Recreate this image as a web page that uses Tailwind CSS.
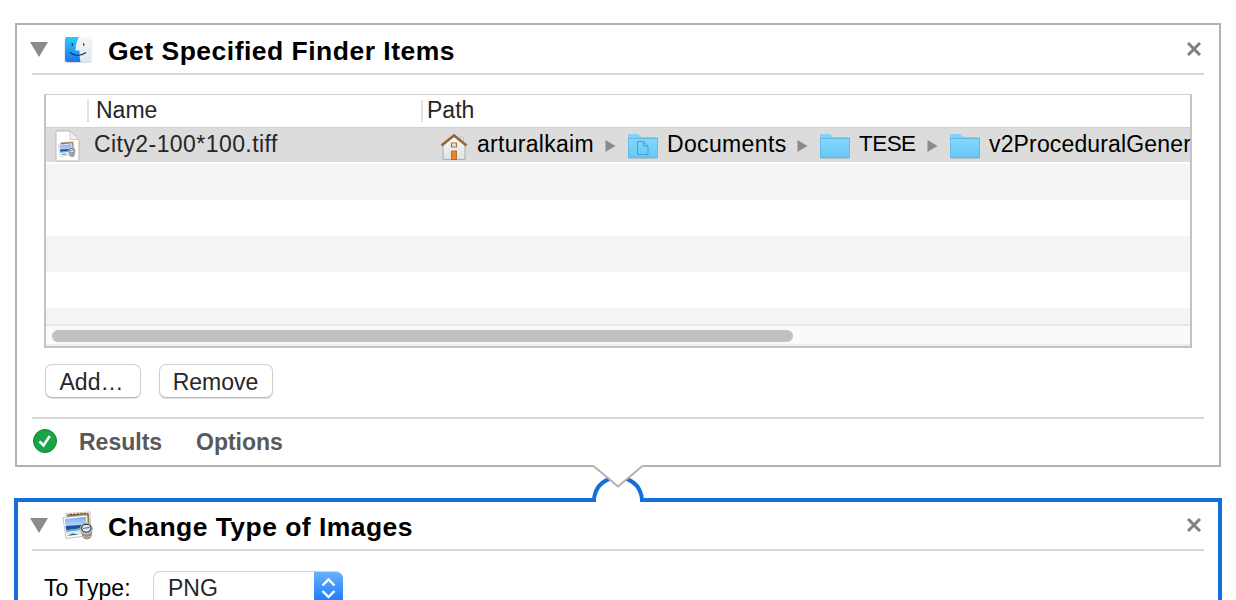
<!DOCTYPE html>
<html lang="en">
<head>
<meta charset="utf-8">
<title>Automator workflow</title>
<script src="https://cdn.jsdelivr.net/npm/@tailwindcss/browser@4"></script>
</head>
<body class="bg-white">
<svg class="absolute h-0 w-0">
  <defs>
    <linearGradient id="fold" x1="0" y1="0" x2="0" y2="1"><stop offset="0" stop-color="#84d6fb"/><stop offset="1" stop-color="#66c8f6"/></linearGradient>
    <linearGradient id="face" x1="0" y1="0" x2="0" y2="1"><stop offset="0" stop-color="#27cdfb"/><stop offset="1" stop-color="#2373ee"/></linearGradient>
    <linearGradient id="facer" x1="0" y1="0" x2="0" y2="1"><stop offset="0" stop-color="#f7f7f8"/><stop offset="1" stop-color="#dce8f5"/></linearGradient>
    <linearGradient id="wall" x1="0" y1="0" x2="0" y2="1"><stop offset="0" stop-color="#fafafa"/><stop offset="1" stop-color="#dfe1e3"/></linearGradient>
    <linearGradient id="sky" x1="0" y1="0" x2="0" y2="1"><stop offset="0" stop-color="#78aef2"/><stop offset="1" stop-color="#c0dcfb"/></linearGradient>
    <symbol id="folder" viewBox="0 0 32 28">
      <path d="M1 25.600h30v1H1z" fill="#8c9ba3" opacity=".7"/>
      <path d="M1 3.200Q1 2 2.200 2h8q1 0 1.700.8l1.400 1.500q.7.7 1.700.7h14.500q1.500 0 1.500 1.500V8H1z" fill="#83d2f5"/>
      <path d="M1 7h30v17.500q0 1.200-1.200 1.200H2.200Q1 25.700 1 24.500z" fill="url(#fold)"/>
      <path d="M1 6.500h30" stroke="#5db9e4"/>
      <path d="M1.500 7v17.600q0 .7.700.7h27.600q.7 0 .7-.7V7" fill="none" stroke="#55b9ea" stroke-width=".8"/>
    </symbol>
    <symbol id="preview" viewBox="0 0 32 30">
      <path d="M4 2.500 28 1l1 20-22 2z" fill="#fff" stroke="#b5b5b5" stroke-width=".8"/>
      <path d="M5 3.500 26.800 2.200l.8 12-21 2z" fill="#9b6b35"/>
      <path d="M8 3.400 26 2.400" stroke="#5a3a1c" stroke-dasharray="2 1.500"/>
      <path d="M1 6.500 25 4l2 20.500L4 27.500z" fill="#fff" stroke="#b0b0b0" stroke-width=".8"/>
      <path d="M2.800 8 23.700 5.800l1 8.700L3.900 16.500z" fill="url(#sky)"/>
      <path d="M3.600 15 24.500 13.600l.3 2.900-20.500 3z" fill="#24509b"/>
      <path d="M4.200 19 24.900 16.500l.3 2-20.700 2.700z" fill="#6fa6d3"/>
      <path d="M4.500 21 24.900 18.200l.3 4.600-20.200 2.700z" fill="#d5edef"/>
      <path d="m5.500 24.800 5-2.300 6 1z" fill="#2f6478"/>
      <path d="M19.300 20l.7 5q1 3 4.700 3.300t5-3.300l.5-5z" fill="#978c82"/>
      <path d="M20 25q5 3 9.500 0" fill="none" stroke="#c9c1b8"/>
      <ellipse cx="24.300" cy="17.800" rx="6.200" ry="5.600" fill="#d5d9dc" stroke="#a0a3a6" stroke-width=".7"/>
      <ellipse cx="24.300" cy="17.300" rx="4.700" ry="4" fill="#e2ebf3" stroke="#26282b" stroke-width="1.100"/>
      <path d="m21 17.500 6.500-1.200" stroke="#4674b8" stroke-width="1.200"/>
    </symbol>
  </defs>
</svg>
<main class="relative flex h-[600px] w-[1236px] flex-col overflow-hidden bg-white pt-[23px] font-['Liberation_Sans',Arial,sans-serif] text-black">

  <section class="mx-[15px] h-[444px] w-[1206px] shrink-0 border-2 border-[#b2b2b2] px-[15px]">
    <header class="flex h-[50px] items-center border-b-2 border-[#d8d8d8]">
      <svg class="ml-[-2px] mt-[1px] h-[15px] w-[18px] shrink-0" viewBox="0 0 18 15"><path d="M0 0h18L9 15z" fill="#8b8b8b"/></svg>
      <svg class="ml-[15px] mt-px h-[30px] w-[30px] shrink-0" viewBox="0 0 30 30">
        <rect x="1.500" y="3" width="27" height="25" rx="2" fill="#999" opacity=".35"/>
        <rect x="2" y="2" width="26" height="25" rx="2" fill="url(#facer)"/>
        <path d="M4 2h12Q12.500 8 12.500 15.500h4q-.3 6 1 11.500H4q-2 0-2-2V4q0-2 2-2z" fill="url(#face)"/>
        <path d="M9.300 8.200v2.600M20.700 8.200v2.600" stroke="#16304c" stroke-width="1.200"/>
        <path d="M7 17.500q7.500 6 16 0" fill="none" stroke="#12314f" stroke-width="1.200"/>
      </svg>
      <h2 class="ml-[15px] mt-[3px] grow whitespace-nowrap text-[26.5px] font-bold leading-[30px] tracking-[0.49px]">Get Specified Finder Items</h2>
      <svg class="mr-[3px] h-[14px] w-[14px] shrink-0" viewBox="0 0 14 14"><path d="m1 1 12 12M13 1 1 13" stroke="#808080" stroke-width="3"/></svg>
    </header>

    <div class="ml-[12px] mt-[19px] h-[254px] w-[1148px] overflow-hidden border-2 border-t border-[#c3c3c3] border-t-[#d0d0d0] text-[23px]">
      <div class="flex h-[32px] items-center text-[#262626]">
        <div class="h-[22px] w-[43px] border-r-2 border-[#e2e2e2]"></div>
        <div class="flex h-[22px] w-[334px] items-center border-r-2 border-[#e2e2e2] pb-[2px] pl-[7px]">Name</div>
        <div class="pb-[2px] pl-[4px]">Path</div>
      </div>
      <div class="flex h-[35px] items-center overflow-hidden whitespace-nowrap border-t border-[#d0d0d0] bg-[#dcdcdc]">
        <svg class="ml-[9px] mt-px h-[32px] w-[25px] shrink-0" viewBox="0 0 25 32">
          <path d="M1 1h14l9 9v21H1z" fill="#fff" stroke="#aaa" stroke-width=".8"/>
          <path d="M15 1v8.500h9z" fill="#f1f1f1" stroke="#bbb" stroke-width=".7"/>
          <use href="#preview" x="3" y="11" width="18" height="17"/>
        </svg>
        <span class="ml-[14px] w-[346px] shrink-0 pb-[2px] tracking-[0.43px] text-[#262626]">City2-100*100.tiff</span>
        <svg class="mt-[4px] h-[28px] w-[28px] shrink-0" viewBox="0 0 28 28">
          <path d="M20 4h3.500v6H20z" fill="#ddd" stroke="#bbb" stroke-width=".6"/>
          <path d="M3 12 14 3l11 9v14.500H3z" fill="url(#wall)" stroke="#999" stroke-width=".7"/>
          <path d="M1.500 12.500 14 2.500l12.500 10" fill="none" stroke="#94673b" stroke-width="2.600"/>
          <path d="M11.500 10h5v4h-5z" fill="#dae9f6" stroke="#b7702f" stroke-width="1.200"/>
          <path d="M11.500 18h5v8.500h-5z" fill="#f0831b" stroke="#a36027" stroke-width=".8"/>
        </svg>
        <span class="ml-[9px] w-[128px] shrink-0 pb-[2px] tracking-[0.28px]">arturalkaim</span>
        <svg class="mt-[2px] h-[12px] w-[11px] shrink-0" viewBox="0 0 11 12"><path d="M.500 0 10.500 6 .500 12z" fill="#8b8b8b"/></svg>
        <svg class="ml-[11px] mt-[2px] h-[28px] w-[32px] shrink-0" viewBox="0 0 32 28"><use href="#folder" width="32" height="28"/><path d="M10.500 9.500h6l4.500 4.500v8.500H10.500zM16.500 9.500V14H21" fill="none" stroke="#37a5da"/></svg>
        <span class="ml-[8px] w-[130px] shrink-0 pb-[2px] tracking-[0.35px]">Documents</span>
        <svg class="mt-[2px] h-[12px] w-[11px] shrink-0" viewBox="0 0 11 12"><path d="M.500 0 10.500 6 .500 12z" fill="#8b8b8b"/></svg>
        <svg class="ml-[11px] mt-[2px] h-[28px] w-[32px] shrink-0"><use href="#folder" width="32" height="28"/></svg>
        <span class="ml-[8px] w-[68px] shrink-0 pb-[2px] text-[22.5px] tracking-[-0.55px]">TESE</span>
        <svg class="mt-[2px] h-[12px] w-[11px] shrink-0" viewBox="0 0 11 12"><path d="M.500 0 10.500 6 .500 12z" fill="#8b8b8b"/></svg>
        <svg class="ml-[11px] mt-[2px] h-[28px] w-[32px] shrink-0"><use href="#folder" width="32" height="28"/></svg>
        <span class="ml-[8px] shrink-0 pb-[2px] tracking-[0.15px]">v2ProceduralGener</span>
      </div>
      <div class="mt-[2px] h-[36px] bg-[#f4f4f4]"></div>
      <div class="h-[36px]"></div>
      <div class="h-[36px] bg-[#f4f4f4]"></div>
      <div class="h-[36px]"></div>
      <div class="h-[16px] bg-[#f4f4f4]"></div>
      <div class="h-[22px] border-y-2 border-t-[#e8e8e8] border-b-[#ededed] bg-[#fafafa] pl-[6px] pt-[4px]">
        <div class="h-[12px] w-[741px] rounded-full bg-[#c1c1c1]"></div>
      </div>
    </div>

    <div class="ml-[13px] mt-[16px] flex gap-[18px] text-[23px] text-[#262626]">
      <button class="h-[34px] w-[96px] rounded-[7px] border border-[#d0d0d0] border-b-[#b8b8b8] bg-white pr-[3px] shadow-[0_1px_1px_rgba(0,0,0,0.12)]">Add…</button>
      <button class="h-[34px] w-[114px] rounded-[7px] border border-[#d0d0d0] border-b-[#b8b8b8] bg-white pr-px shadow-[0_1px_1px_rgba(0,0,0,0.12)]">Remove</button>
    </div>

    <footer class="mt-[19px] flex h-[48px] items-center border-t-2 border-[#d8d8d8] text-[23px] font-bold text-[#595959]">
      <svg class="-mt-[2px] ml-[1px] h-[24px] w-[24px] shrink-0" viewBox="0 0 24 24"><circle cx="12" cy="12" r="11.500" fill="#1aa345" stroke="#168338"/><path d="m6.500 12.300 4 4.200L16.800 7" fill="none" stroke="#fff" stroke-width="2.600"/></svg>
      <span class="ml-[22px] w-[117px]">Results</span>
      <span>Options</span>
    </footer>
  </section>

  <section class="mx-[14px] mt-[31px] h-[120px] w-[1208px] shrink-0 border-4 border-b-0 border-[#146fd9] px-[14px]">
    <header class="flex h-[49px] items-center border-b-2 border-[#d8d8d8]">
      <svg class="-mt-px ml-[-2px] h-[15px] w-[18px] shrink-0" viewBox="0 0 18 15"><path d="M0 0h18L9 15z" fill="#8b8b8b"/></svg>
      <svg class="ml-[14px] h-[30px] w-[32px] shrink-0"><use href="#preview" width="32" height="30"/></svg>
      <h2 class="ml-[14px] mt-[2px] grow whitespace-nowrap text-[26.5px] font-bold leading-[30px] tracking-[0.45px]">Change Type of Images</h2>
      <svg class="-mt-px mr-[3px] h-[14px] w-[14px] shrink-0" viewBox="0 0 14 14"><path d="m1 1 12 12M13 1 1 13" stroke="#808080" stroke-width="3"/></svg>
    </header>
    <div class="mt-[20px] flex pl-[12px] text-[23px]">
      <span class="w-[109px] leading-[35px]">To Type:</span>
      <div class="flex h-[36px] w-[190px] overflow-hidden rounded-[7px] border border-r-0 border-[#d2d2d2] pl-[14px] leading-[33px] text-[#262626]">
        <span class="grow">PNG</span>
        <svg class="-mt-[1px] h-[36px] w-[29px]" viewBox="0 0 29 36"><defs><linearGradient id="pop" x1="0" y1="0" x2="0" y2="1"><stop offset="0" stop-color="#6bb2fa"/><stop offset="1" stop-color="#0d74ff"/></linearGradient></defs><path d="M0 0h29v36H0z" fill="url(#pop)"/><path d="m8.500 14.500 6-6 6 6M8.500 20l6 6 6-6" fill="none" stroke="#fff" stroke-width="2.400"/></svg>
      </div>
    </div>
  </section>

  <svg class="absolute left-[588px] top-[463px] h-[42px] w-[60px]" viewBox="0 0 60 42">
    <path d="M8 35h44v4H8z" fill="#fff"/>
    <path d="M6 39V36Q8 19 25 15M54 39V36Q52 19 35 15" fill="none" stroke="#146fd9" stroke-width="4"/>
    <path d="M5.500 0h49v3L30 23.500 5.500 3z" fill="#fff"/>
    <path d="M5.500 3 30 23.500 54.500 3" fill="none" stroke="#b2b2b2" stroke-width="2"/>
  </svg>
</main>
</body>
</html>
